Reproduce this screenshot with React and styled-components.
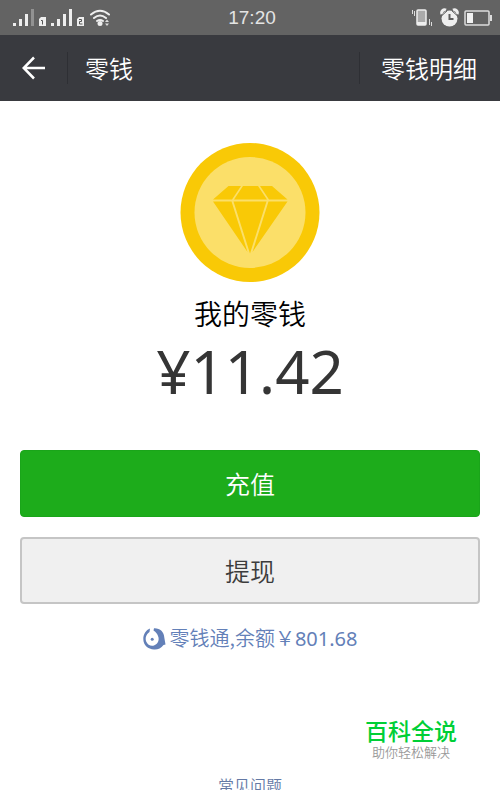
import React from "react";
import styled, { createGlobalStyle } from "styled-components";

const GlobalStyle = createGlobalStyle`
  *, *::before, *::after { box-sizing: border-box; }
  body {
    margin: 0;
    background: #fff;
    font-family: "Noto Sans CJK SC", sans-serif;
    font-weight: 350;
  }
  button { font-family: inherit; font-weight: inherit; cursor: pointer; }
`;

const Page = styled.div`
  display: flex;
  flex-direction: column;
  min-height: 100vh;
  background: #fff;
`;

const StatusBar = styled.div`
  display: grid;
  grid-template-columns: 1fr auto 1fr;
  align-items: center;
  height: 35px;
  padding: 0 8px 0 12px;
  background: #636363;
  color: #e4e4e4;
  svg { display: block; }
`;

const Clock = styled.time`
  font-family: "Liberation Sans", sans-serif;
  font-size: 19px;
  line-height: 24px;
`;

const StatusIcons = styled.div`
  display: flex;
  justify-content: ${(p) => (p.$end ? "flex-end" : "flex-start")};
`;

const NavBar = styled.header`
  display: flex;
  align-items: center;
  height: 66px;
  background: #393a3f;
  color: #fff;
`;

const BackButton = styled.button`
  display: flex;
  align-items: center;
  justify-content: center;
  width: 67px;
  height: 32px;
  padding: 0;
  border: 0;
  background: none;
  color: inherit;
`;

const Divider = styled.span`
  width: 1px;
  height: 32px;
  background: #2e2f34;
`;

const NavTitle = styled.h1`
  flex: 1;
  margin: 0;
  padding-left: 17px;
  font-size: 24px;
  line-height: 32px;
  font-weight: inherit;
`;

const NavAction = styled.button`
  padding: 0 23px 0 21px;
  border: 0;
  background: none;
  color: inherit;
  font-size: 24px;
  line-height: 32px;
`;

const Main = styled.main`
  display: flex;
  flex: 1;
  flex-direction: column;
  align-items: center;
  padding: 42px 20px 0;
`;

const Label = styled.p`
  margin: 12px 0 0;
  color: #000;
  font-size: 28px;
  line-height: 36px;
`;

const Amount = styled.p`
  margin: 8px 0 0;
  color: #353535;
  font-family: "Noto Sans", sans-serif;
  font-size: 60px;
  font-weight: 400;
  line-height: 64px;
`;

const Actions = styled.div`
  display: grid;
  gap: 20px;
  width: 100%;
  margin-top: 47px;
`;

const ActionButton = styled.button`
  height: 67px;
  padding: 0 0 2px;
  border: ${(p) => (p.$primary ? "1px solid #1aa51a" : "2px solid #c5c5c5")};
  border-radius: 4px;
  background: ${(p) => (p.$primary ? "#1dac1b" : "#f0f0f0")};
  color: ${(p) => (p.$primary ? "#fff" : "#3c3c3c")};
  font-size: 25px;
  line-height: 32px;
`;

const FundLink = styled.a`
  display: flex;
  align-items: center;
  gap: 4px;
  margin-top: 20px;
  color: #6380b8;
  font-size: 20px;
  line-height: 28px;
  text-decoration: none;
`;

const Balance = styled.span`
  font-family: "Noto Sans", sans-serif;
  font-weight: 400;
`;

const Brand = styled.aside`
  display: flex;
  flex-direction: column;
  align-items: center;
  align-self: flex-end;
  margin: 64px 23px 0 0;
`;

const BrandName = styled.strong`
  color: #00cf36;
  font-size: 23px;
  line-height: 26px;
  font-weight: 500;
`;

const BrandSlogan = styled.span`
  color: #999;
  font-size: 13px;
  line-height: 18px;
`;

const Footer = styled.footer`
  display: flex;
  justify-content: center;
  height: 16px;
  margin-top: auto;
  overflow: hidden;
`;

const HelpLink = styled.a`
  color: #6479a5;
  font-size: 16px;
  line-height: 22px;
  text-decoration: none;
`;

function SignalIcons() {
  return (
    <svg width="100" height="20" viewBox="12 7 100 20" role="img" aria-label="信号与无线网络">
      <g fill="#eee">
        <path d="M13 22h3v3h-3zM19 18h3v7h-3zM25 13h3v12h-3zM51 22h3v3h-3zM57 18h3v7h-3zM63 13h3v12h-3zM69 8h3v17h-3z" />
        <path fill="#929292" d="M31 8h3v17h-3z" />
        <path d="M41 16h5v9h-7v-7zM79 16h5v9h-7v-7z" />
      </g>
      <g fill="none" stroke="#555" strokeWidth="1">
        <path d="M41 19.500h1.500v4" />
        <path d="M79 18.500h2.500v2h-2v2.500h3" />
      </g>
      <g fill="none" stroke="#eee" strokeWidth="2" strokeLinecap="round">
        <path d="M91 13.500q9-7.500 18 0M94 17q6-5 12 0M97 20q3-2 6 0" />
      </g>
      <circle cx="100" cy="22.500" r="2.500" fill="#eee" />
      <path d="M105 21l2-2.500 2 2.500zM105 22.500l2 2.500 2-2.500z" fill="#ddd" />
    </svg>
  );
}

function DeviceIcons() {
  return (
    <svg width="82" height="22" viewBox="410 6 82 22" role="img" aria-label="振动、闹钟与电量">
      <rect x="417" y="9" width="9" height="15" rx="1" fill="#aaa" stroke="#eee" strokeWidth="1.500" />
      <path d="M417 21h9v3h-9z" fill="#eee" />
      <path d="M412.500 9v4M414.500 10v5M429.500 18v6M431.500 21v4" stroke="#ddd" />
      <circle cx="449.500" cy="17.500" r="8" fill="#eee" />
      <path d="M442 13a3 3 0 0 1 4-4M453 9a3 3 0 0 1 4 4" fill="none" stroke="#eee" strokeWidth="3" />
      <path d="M442 14.500l5-4.500M452 10l5 4.500" stroke="#666" />
      <path d="M449.500 13v5h4" fill="none" stroke="#5d5d5d" strokeWidth="2" />
      <rect x="465" y="10" width="24" height="14" rx="1" fill="none" stroke="#ddd" strokeWidth="1.500" />
      <path d="M467 12h6v10h-6z" fill="#f2f2f2" />
      <path d="M490 14h2v6h-2z" fill="#ddd" />
    </svg>
  );
}

function BackIcon() {
  return (
    <svg width="24" height="24" viewBox="0 0 24 24" fill="none" stroke="currentColor" strokeWidth="2.500" aria-hidden="true">
      <path d="M12 1.500L1.700 12 12 22.500M2 12h21" />
    </svg>
  );
}

function CoinIcon() {
  return (
    <svg width="140" height="140" viewBox="0 0 140 140" aria-hidden="true">
      <circle cx="70" cy="69.500" r="69.500" fill="#f9c906" />
      <circle cx="70" cy="69.500" r="55.500" fill="#fbdf69" />
      <g fill="#f9c906">
        <path d="M48.500 43H61L52 56.500H33zM63 43h15l9 13.500H54zM80 43h12l15.500 13.500H89z" />
        <path d="M33 58.500h18.500L67.500 109zM53.500 58.500h33L70 110.500zM88.500 58.500h19L72.500 109z" />
      </g>
    </svg>
  );
}

function FundIcon() {
  return (
    <svg width="23" height="22" viewBox="0 0 23 22" aria-hidden="true">
      <path
        d="M7 0.500L6.500 4C3 6.500 2 10 3.200 13.500C4.500 17 8 18.500 11 17.500C15 16 16.500 12 15.200 8.500C14.500 6 13 4 10.500 2.500L11 0.300C17 0 21 4 21.300 9.500L22.500 16.500L20.500 17C18 20.500 14.500 21.800 11 21.500C5 21.300 0.300 17 0.300 11C0.300 6 3 2 7 0.500z"
        fill="currentColor"
      />
      <circle cx="9.200" cy="11.300" r="1.500" fill="currentColor" />
    </svg>
  );
}

export default function App() {
  return (
    <>
      <GlobalStyle />
      <Page lang="zh-CN">
        <StatusBar>
          <StatusIcons>
            <SignalIcons />
          </StatusIcons>
          <Clock>17:20</Clock>
          <StatusIcons $end>
            <DeviceIcons />
          </StatusIcons>
        </StatusBar>
        <NavBar>
          <BackButton type="button" aria-label="返回">
            <BackIcon />
          </BackButton>
          <Divider />
          <NavTitle>零钱</NavTitle>
          <Divider />
          <NavAction type="button">零钱明细</NavAction>
        </NavBar>
        <Main>
          <CoinIcon />
          <Label>我的零钱</Label>
          <Amount>¥11.42</Amount>
          <Actions>
            <ActionButton type="button" $primary>充值</ActionButton>
            <ActionButton type="button">提现</ActionButton>
          </Actions>
          <FundLink href="#fund">
            <FundIcon />
            <span>
              零钱通,余额￥<Balance>801.68</Balance>
            </span>
          </FundLink>
          <Brand>
            <BrandName>百科全说</BrandName>
            <BrandSlogan>助你轻松解决</BrandSlogan>
          </Brand>
        </Main>
        <Footer>
          <HelpLink href="#help">常见问题</HelpLink>
        </Footer>
      </Page>
    </>
  );
}
